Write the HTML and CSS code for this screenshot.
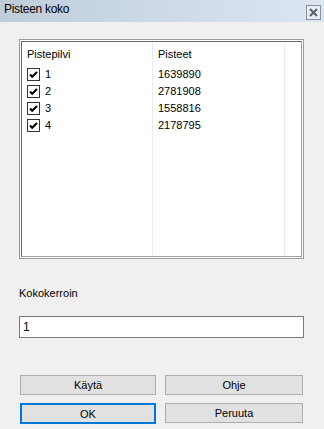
FILE: index.html
```html
<!DOCTYPE html>
<html>
<head>
<meta charset="utf-8">
<link rel="stylesheet" href="styles.css">
</head>
<body>
<div class="window">
  <div class="titlebar">
    <span class="title">Pisteen koko</span>
    <span class="close"><svg width="9" height="9" viewBox="0 0 9 9"><path d="M1 1 L8 8 M8 1 L1 8" stroke="#5a5f66" stroke-width="2"/></svg></span>
  </div>
  <div class="content">
    <div class="listbox">
      <div class="listinner">
        <div class="grid">
          <div class="hcell c1">Pistepilvi</div>
          <div class="hcell c2">Pisteet</div>
          <div class="hcell c3"></div>
          <div class="cell c1"><span class="cb"><svg width="13" height="13" viewBox="0 0 13 13"><rect x="0.5" y="0.5" width="12" height="12" fill="#fff" stroke="#333"/><path d="M3 6.5 L5.2 8.8 L10 4" fill="none" stroke="#000" stroke-width="2"/></svg></span>1</div>
          <div class="cell c2">1639890</div>
          <div class="cell c3"></div>
          <div class="cell c1"><span class="cb"><svg width="13" height="13" viewBox="0 0 13 13"><rect x="0.5" y="0.5" width="12" height="12" fill="#fff" stroke="#333"/><path d="M3 6.5 L5.2 8.8 L10 4" fill="none" stroke="#000" stroke-width="2"/></svg></span>2</div>
          <div class="cell c2">2781908</div>
          <div class="cell c3"></div>
          <div class="cell c1"><span class="cb"><svg width="13" height="13" viewBox="0 0 13 13"><rect x="0.5" y="0.5" width="12" height="12" fill="#fff" stroke="#333"/><path d="M3 6.5 L5.2 8.8 L10 4" fill="none" stroke="#000" stroke-width="2"/></svg></span>3</div>
          <div class="cell c2">1558816</div>
          <div class="cell c3"></div>
          <div class="cell c1"><span class="cb"><svg width="13" height="13" viewBox="0 0 13 13"><rect x="0.5" y="0.5" width="12" height="12" fill="#fff" stroke="#333"/><path d="M3 6.5 L5.2 8.8 L10 4" fill="none" stroke="#000" stroke-width="2"/></svg></span>4</div>
          <div class="cell c2">2178795</div>
          <div class="cell c3"></div>
          <div class="fill c1"></div>
          <div class="fill c2"></div>
          <div class="fill c3"></div>
        </div>
      </div>
    </div>
    <div class="label">Kokokerroin</div>
    <div class="textbox">1</div>
    <div class="buttons">
      <div class="btn">Käytä</div>
      <div class="btn">Ohje</div>
      <div class="btn default">OK</div>
      <div class="btn">Peruuta</div>
    </div>
  </div>
</div>
</body>
</html>
```
FILE: styles.css
```css
html, body {
  margin: 0;
  padding: 0;
}
body {
  width: 324px;
  height: 429px;
  background: #f0f0f0;
  font-family: "Liberation Sans", Arial, sans-serif;
  font-size: 11px;
  color: #000;
  overflow: hidden;
}
.window {
  display: flex;
  flex-direction: column;
  height: 429px;
}
.titlebar {
  height: 22px;
  display: flex;
  align-items: flex-start;
  background: linear-gradient(to right, #bfcddb, #dbe6f1);
  box-sizing: border-box;
  padding: 2px 3px 0 4px;
}
.title {
  font-size: 12px;
  letter-spacing: -0.3px;
  line-height: 14px;
}
.close {
  margin-left: auto;
  margin-top: 3px;
  width: 15px;
  height: 15px;
  box-sizing: border-box;
  border: 1px solid #8c9198;
  background: #e6edf4;
  display: flex;
  align-items: center;
  justify-content: center;
}
.close svg { display: block; }
.content {
  padding: 17px 20px 0 19px;
}
.listbox {
  height: 220px;
  width: 285px;
  box-sizing: border-box;
  border: 1px solid #9a9a9a;
  padding: 1px;
  background: #fff;
}
.listinner {
  height: 100%;
  box-sizing: border-box;
  border-left: 1px solid #696969;
  border-top: 1px solid #696969;
  border-right: 1px solid #a0a0a0;
  border-bottom: 1px solid #a0a0a0;
  overflow: hidden;
}
.grid {
  display: grid;
  grid-template-columns: 131px 132px 14px;
  grid-template-rows: 23px repeat(4, 17px) 1fr;
  height: 100%;
}
.hcell, .cell, .fill {
  border-right: 1px solid #e8ebef;
  padding-left: 5px;
  display: flex;
  align-items: center;
  white-space: nowrap;
}
.hcell {
  padding-top: 1px;
  box-sizing: border-box;
}
.cell {
  padding-top: 1px;
}
.cb {
  display: inline-flex;
  margin-right: 5px;
}
.cb svg { display: block; }
.c3 { border-right: none; }
.label {
  margin-top: 27px;
  line-height: 14px;
}
.textbox {
  margin-top: 16px;
  width: 285px;
  height: 22px;
  box-sizing: border-box;
  border: 1px solid #7a7a7a;
  background: #fff;
  font-size: 12px;
  padding-left: 3px;
  display: flex;
  align-items: center;
}
.buttons {
  margin-top: 37px;
  margin-left: 1px;
  display: grid;
  grid-template-columns: 136px 138px;
  column-gap: 9px;
  row-gap: 8px;
}
.btn {
  height: 20px;
  box-sizing: border-box;
  border: 1px solid #adadad;
  background: #e1e1e1;
  display: flex;
  align-items: center;
  justify-content: center;
}
.btn.default {
  border: 2px solid #0078d7;
  height: 21px;
}
```
